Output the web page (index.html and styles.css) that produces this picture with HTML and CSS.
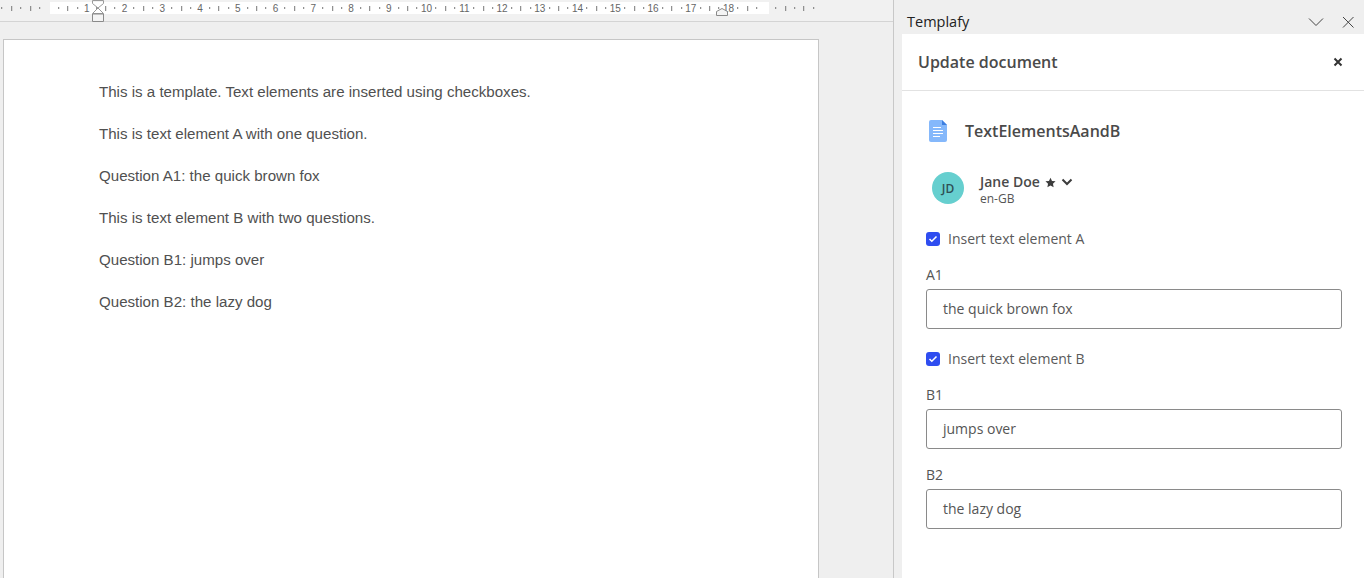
FILE: index.html
```html
<!DOCTYPE html>
<html lang="en">
<head>
<meta charset="utf-8">
<title>Templafy - Update document</title>
<link rel="stylesheet" href="styles.css">
</head>
<body>
<div class="app">
  <main class="editor">
    <div class="ruler">
      <i class="d"></i><i class="t"></i><i class="d"></i><i class="t"></i><i class="d"></i><i></i><i class="d"></i><i class="t"></i><i class="d"></i><b>1</b>
      <i class="d"></i><i class="t"></i><i class="d"></i><b>2</b>
      <i class="d"></i><i class="t"></i><i class="d"></i><b>3</b>
      <i class="d"></i><i class="t"></i><i class="d"></i><b>4</b>
      <i class="d"></i><i class="t"></i><i class="d"></i><b>5</b>
      <i class="d"></i><i class="t"></i><i class="d"></i><b>6</b>
      <i class="d"></i><i class="t"></i><i class="d"></i><b>7</b>
      <i class="d"></i><i class="t"></i><i class="d"></i><b>8</b>
      <i class="d"></i><i class="t"></i><i class="d"></i><b>9</b>
      <i class="d"></i><i class="t"></i><i class="d"></i><b>10</b>
      <i class="d"></i><i class="t"></i><i class="d"></i><b>11</b>
      <i class="d"></i><i class="t"></i><i class="d"></i><b>12</b>
      <i class="d"></i><i class="t"></i><i class="d"></i><b>13</b>
      <i class="d"></i><i class="t"></i><i class="d"></i><b>14</b>
      <i class="d"></i><i class="t"></i><i class="d"></i><b>15</b>
      <i class="d"></i><i class="t"></i><i class="d"></i><b>16</b>
      <i class="d"></i><i class="t"></i><i class="d"></i><b>17</b>
      <i class="d"></i><i class="t"></i><i class="d"></i><b>18</b>
      <i class="d"></i><i class="t"></i><i class="d"></i><i></i><i class="d"></i><i class="t"></i><i class="d"></i><i class="t"></i><i class="d"></i>
      <svg class="indent-left" width="12" height="22" viewBox="0 0 12 22" aria-hidden="true">
        <path d="M.5.5h11v3L6 8 .5 3.500zM6 8l5.500 5.500H.5z" fill="none" stroke="#9a9a9a"/>
        <path d="M.5 14h11v7.500H.5z" fill="#f4f4f4" stroke="#8a8a8a"/>
      </svg>
      <svg class="indent-right" width="12" height="8" viewBox="0 0 12 8" aria-hidden="true">
        <path d="M.5 7.500v-4L6 .5l5.500 3v4z" fill="#f4f4f4" stroke="#8a8a8a"/>
      </svg>
    </div>
    <article class="sheet">
      <p>This is a template. Text elements are inserted using checkboxes.</p>
      <p>This is text element A with one question.</p>
      <p>Question A1: the quick brown fox</p>
      <p>This is text element B with two questions.</p>
      <p>Question B1: jumps over</p>
      <p>Question B2: the lazy dog</p>
    </article>
  </main>
  <aside class="pane">
    <header class="pane-head">
      <span class="pane-name">Templafy</span>
      <svg width="16" height="16" viewBox="0 0 16 16" aria-hidden="true"><path d="M1 4.500l7 7 7-7" fill="none" stroke="#444" stroke-width="1"/></svg>
      <svg width="16" height="16" viewBox="0 0 16 16" aria-hidden="true"><path d="M3 3l10.500 10.500M13.500 3L3 13.500" fill="none" stroke="#444" stroke-width="1"/></svg>
    </header>
    <section class="card">
      <div class="card-head">
        <h1>Update document</h1>
        <svg width="10" height="10" viewBox="0 0 10 10" aria-hidden="true"><path d="M1.500 1.500l7 7M8.500 1.500l-7 7" fill="none" stroke="#333" stroke-width="2"/></svg>
      </div>
      <div class="doc">
        <svg width="18" height="22" viewBox="0 0 18 22" aria-hidden="true">
          <path d="M2 0h11l5 5v15a2 2 0 0 1-2 2H2a2 2 0 0 1-2-2V2a2 2 0 0 1 2-2z" fill="#85b8fb"/>
          <path d="M13 0l5 5h-5z" fill="#3d7fe0"/>
          <path d="M4 7.500h8M4 10.500h10M4 13.500h10M4 16.500h7" stroke="#fff" stroke-width="1"/>
        </svg>
        <span class="doc-name">TextElementsAandB</span>
      </div>
      <div class="profile">
        <span class="avatar">JD</span>
        <div class="who">
          <div class="who-name">Jane Doe
            <svg width="11" height="11" viewBox="0 0 24 24" aria-hidden="true"><path d="M12 1.500l3.300 7 7.700 1-5.600 5.300 1.400 7.700L12 18.700l-6.800 3.800 1.400-7.700L1 9.500l7.700-1z" fill="#3c3c3c"/></svg>
            <svg width="12" height="8" viewBox="0 0 12 8" aria-hidden="true"><path d="M1.500 1.500L6 6l4.500-4.500" fill="none" stroke="#3c3c3c" stroke-width="2"/></svg>
          </div>
          <div class="who-lang">en-GB</div>
        </div>
      </div>
      <label class="check"><span class="box"><svg width="10" height="8" viewBox="0 0 10 8" aria-hidden="true"><path d="M1.500 4l2.300 2.300L8.500 1.500" fill="none" stroke="#fff" stroke-width="1.500"/></svg></span>Insert text element A</label>
      <div class="field"><span class="field-label">A1</span><div class="input">the quick brown fox</div></div>
      <label class="check"><span class="box"><svg width="10" height="8" viewBox="0 0 10 8" aria-hidden="true"><path d="M1.500 4l2.300 2.300L8.500 1.500" fill="none" stroke="#fff" stroke-width="1.500"/></svg></span>Insert text element B</label>
      <div class="field"><span class="field-label">B1</span><div class="input">jumps over</div></div>
      <div class="field"><span class="field-label">B2</span><div class="input">the lazy dog</div></div>
    </section>
  </aside>
</div>
</body>
</html>
```
FILE: styles.css
```css
* { box-sizing: border-box; }
html, body { margin: 0; height: 100%; overflow: hidden; }
body { background: #efefef; font-family: "Open Sans", "Noto Sans", sans-serif; color: #3c3c3c; }
.app { display: flex; width: 1364px; height: 578px; overflow: hidden; }

.editor { width: 894px; flex: none; border-right: 1px solid #c8c8c8; background: #efefef; }
.ruler {
  position: relative;
  display: flex;
  align-items: center;
  height: 22px;
  padding: 0 0 5px 0;
  border-bottom: 1px solid #d4d4d4;
  background:
    linear-gradient(90deg, transparent 50px, #fff 50px, #fff 769px, transparent 769px) 0 2px / 100% 12px no-repeat,
    #f1f1f1;
}
.ruler i, .ruler b {
  flex: 0 0 9.45px;
  width: 9.45px;
  min-width: 0;
  display: flex;
  align-items: center;
  justify-content: center;
  height: 12px;
  font: normal 10px "Liberation Sans", sans-serif;
  color: #666;
  transform: translateX(-2.8px);
}
.ruler b { white-space: nowrap; }
.ruler .d::before { content: ""; width: 1px; height: 2px; background: #777; }
.ruler .t::before { content: ""; width: 1px; height: 5px; background: #777; }
.indent-left { position: absolute; left: 92px; top: 0; }
.indent-right { position: absolute; left: 716px; top: 8px; }

.sheet {
  width: 816px;
  height: 560px;
  margin: 17px 0 0 3px;
  padding: 42px 0 0 95px;
  background: #fff;
  border: 1px solid #c6c6c6;
  font-family: "Liberation Sans", sans-serif;
  font-size: 15.1px;
  line-height: 20px;
  color: #505050;
}
.sheet p { margin: 0 0 22px; }

.pane { flex: 1; min-width: 0; padding-left: 8px; display: flex; flex-direction: column; }
.pane-head { display: flex; align-items: center; gap: 16px; height: 34px; padding: 9px 8px 0 5px; }
.pane-name { flex: 1; font-size: 14.500px; font-weight: 400; color: #222; }
.card { flex: 1; background: #fff; padding: 0 22px 0 24px; }
.card-head {
  display: flex; align-items: center; justify-content: space-between;
  height: 57px; margin: 0 -22px 0 -24px; padding: 0 21px 0 16px;
  border-bottom: 1px solid #e2e2e2;
}
h1 { margin: 0; font-size: 16px; font-weight: 600; color: #4a4a4a; }
.doc { display: flex; align-items: center; gap: 18px; height: 24px; margin: 28px 0 0 3px; }
.doc-name { font-size: 16px; font-weight: 600; color: #4a4a4a; }
.profile { display: flex; align-items: center; gap: 16px; margin: 25px 0 0 6px; height: 40px; }
.avatar {
  width: 32px; height: 32px; border-radius: 50%; background: #66cfcf;
  display: flex; align-items: center; justify-content: center;
  font-size: 12px; font-weight: 600; color: #2f4f55;
}
.who { padding-top: 4px; }
.who-name { display: flex; align-items: center; gap: 5px; font-size: 14px; font-weight: 600; color: #4a4a4a; line-height: 18px; }
.who-lang { font-size: 12px; color: #555; line-height: 16px; }
.check { display: flex; align-items: center; gap: 8px; height: 20px; padding-bottom: 2px; font-size: 14px; color: #5a5a5a; }
.profile + .check { margin-top: 21px; }
.box {
  width: 14px; height: 14px; border-radius: 3px; background: #2f4df0; margin-top: 2px;
  display: flex; align-items: center; justify-content: center;
}
.field-label { display: block; font-size: 14px; line-height: 18px; color: #555; margin-bottom: 5px; }
.input {
  height: 40px; border: 1px solid #8a8a8a; border-radius: 3px;
  padding: 0 16px 2px; display: flex; align-items: center;
  font-size: 14px; color: #555;
}
.check + .field { margin-top: 17px; }
.field + .check { margin-top: 20px; }
.field + .field { margin-top: 17px; }
```
